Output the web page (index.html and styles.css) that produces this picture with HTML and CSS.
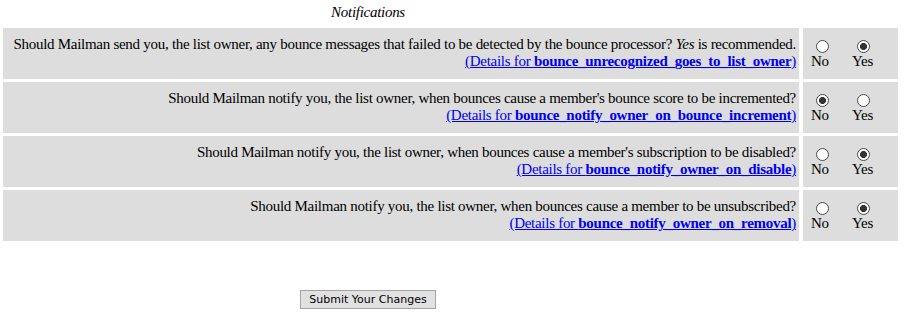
FILE: index.html
```html
<!DOCTYPE html>
<html>
<head>
<meta charset="utf-8">
<title>Bounce processing</title>
<link rel="stylesheet" href="styles.css">
</head>
<body>
<form class="page">
  <div class="title"><em>Notifications</em></div>
  <table class="opts">
    <tr>
      <td class="desc">Should Mailman send you, the list owner, any bounce messages that failed to be detected by the bounce processor? <em>Yes</em> is recommended.<br><a href="#">(Details for <strong>bounce_unrecognized_goes_to_list_owner</strong>)</a></td>
      <td class="choice">
        <div class="radios">
          <label class="opt"><input type="radio" name="r1"><span>No</span></label>
          <label class="opt"><input type="radio" name="r1" checked><span>Yes</span></label>
        </div>
      </td>
    </tr>
    <tr>
      <td class="desc">Should Mailman notify you, the list owner, when bounces cause a member's bounce score to be incremented?<br><a href="#">(Details for <strong>bounce_notify_owner_on_bounce_increment</strong>)</a></td>
      <td class="choice">
        <div class="radios">
          <label class="opt"><input type="radio" name="r2" checked><span>No</span></label>
          <label class="opt"><input type="radio" name="r2"><span>Yes</span></label>
        </div>
      </td>
    </tr>
    <tr>
      <td class="desc">Should Mailman notify you, the list owner, when bounces cause a member's subscription to be disabled?<br><a href="#">(Details for <strong>bounce_notify_owner_on_disable</strong>)</a></td>
      <td class="choice">
        <div class="radios">
          <label class="opt"><input type="radio" name="r3"><span>No</span></label>
          <label class="opt"><input type="radio" name="r3" checked><span>Yes</span></label>
        </div>
      </td>
    </tr>
    <tr>
      <td class="desc">Should Mailman notify you, the list owner, when bounces cause a member to be unsubscribed?<br><a href="#">(Details for <strong>bounce_notify_owner_on_removal</strong>)</a></td>
      <td class="choice">
        <div class="radios">
          <label class="opt"><input type="radio" name="r4"><span>No</span></label>
          <label class="opt"><input type="radio" name="r4" checked><span>Yes</span></label>
        </div>
      </td>
    </tr>
  </table>
  <div class="submit-row"><button type="button" class="submit">Submit Your Changes</button></div>
</form>
</body>
</html>
```

FILE: styles.css
```css
html, body {
  margin: 0;
  padding: 0;
  background: #ffffff;
}

body {
  font-family: "Liberation Serif", "Times New Roman", serif;
  font-size: 15px;
  letter-spacing: -0.28px;
  color: #000000;
}

.page {
  margin: 0;
}

.title {
  width: 736px;
  text-align: center;
  padding-top: 3px;
  line-height: 18px;
}

.opts {
  border-collapse: separate;
  border-spacing: 4px 3.33px;
  width: 903px;
  margin: 3.67px 0 0 -1px;
}

.opts td {
  background: #dddddd;
  height: 51px;
  box-sizing: border-box;
  vertical-align: middle;
}

.desc {
  text-align: right;
  padding: 0 3px 0 6px;
}

.desc a {
  color: #0000ee;
  text-decoration: underline;
}

.choice {
  width: 95px;
  padding: 0 0 0 8px;
}

.radios {
  display: flex;
  gap: 20px;
  align-items: flex-start;
}

.opt {
  display: flex;
  flex-direction: column;
  align-items: flex-start;
}

.opt input {
  appearance: none;
  -webkit-appearance: none;
  display: block;
  box-sizing: border-box;
  margin: 3px 3px 0 5px;
  width: 13px;
  height: 13px;
  border: 1px solid #4a4a4a;
  border-radius: 50%;
  background: #ffffff;
}

.opt input:checked {
  background: radial-gradient(circle, #333333 0, #333333 3.2px, #ffffff 3.8px);
}

.opt span {
  display: block;
  line-height: 17px;
}

.submit-row {
  width: 736px;
  text-align: center;
  margin-top: 46px;
}

.submit {
  font-family: "DejaVu Sans", Verdana, sans-serif;
  font-size: 11px;
  letter-spacing: 0;
  height: 19px;
  padding: 0 8.5px;
  background: #e1e1e1;
  border: 1px solid #a3a3a3;
  border-radius: 0;
  color: #000000;
}
```
